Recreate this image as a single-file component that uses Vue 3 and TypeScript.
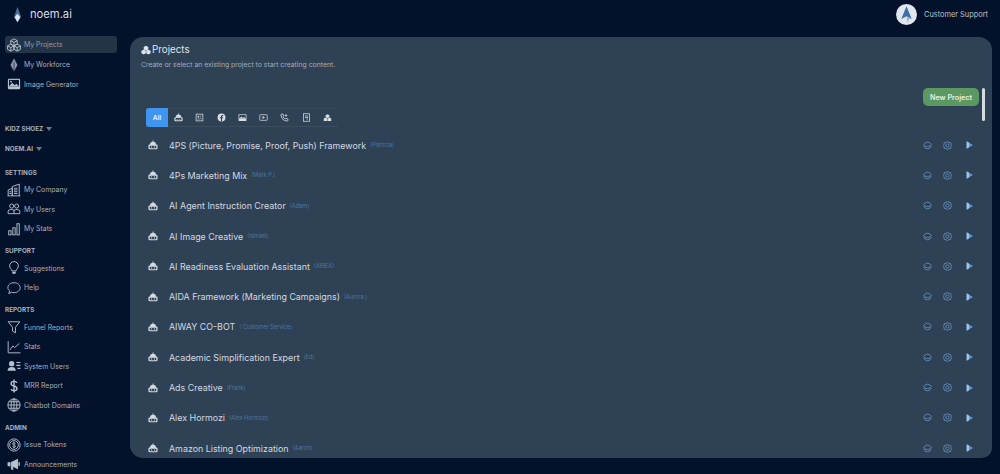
<template>
  <div class="page">
    <aside class="sidebar">
      <div class="brand">
        <svg class="brand-logo" viewBox="0 0 16 24">
          <path d="M8 1 L13 15 L8 23 L3 15 Z" fill="#4a6c94" />
          <path d="M8 11 L12 16 L8 23 L4 16 Z" fill="#dbe7f5" />
        </svg>
        <span>noem.ai</span>
      </div>

      <nav class="nav-top">
        <a
          v-for="item in topNav"
          :key="item.label"
          class="nav-item"
          :class="{ active: item.active }"
        >
          <svg class="nav-icon" viewBox="0 0 24 24" v-html="icons[item.icon]"></svg>
          {{ item.label }}
        </a>
      </nav>

      <div class="org first">KIDZ SHOEZ <span class="caret"></span></div>
      <div class="org">NOEM.AI <span class="caret"></span></div>

      <section v-for="group in groups" :key="group.title" class="group">
        <h4>{{ group.title }}</h4>
        <a v-for="item in group.items" :key="item.label" class="nav-item">
          <svg class="nav-icon" viewBox="0 0 24 24" v-html="icons[item.icon]"></svg>
          {{ item.label }}
        </a>
      </section>
    </aside>

    <div class="main">
      <header class="topbar">
        <svg class="avatar" viewBox="0 0 24 24">
          <circle cx="12" cy="12" r="12" fill="#dfe6ee" />
          <path d="M12 2.5 L18 17 L12 14 L6 17 Z" fill="#3f6ea6" />
          <path d="M12 14 L16 16 L13 21 Z" fill="#9db6c9" />
        </svg>
        <span>Customer Support</span>
      </header>

      <main class="panel">
        <span class="scrollbar"></span>
        <h1>
          <svg class="title-icon" viewBox="0 0 24 24" v-html="icons.cubesSolid"></svg>
          Projects
        </h1>
        <p class="sub">Create or select an existing project to start creating content.</p>

        <div class="actions">
          <button class="new-btn">New Project</button>
        </div>

        <div class="tabs">
          <span class="tab on">All</span>
          <span v-for="t in tabs" :key="t" class="tab">
            <svg viewBox="0 0 24 24" v-html="icons[t]"></svg>
          </span>
        </div>

        <ul class="rows">
          <li v-for="row in projects" :key="row.name" class="row">
            <svg class="row-bot" viewBox="0 0 24 24" v-html="icons.bot"></svg>
            <span class="name">{{ row.name }}</span>
            <span class="owner">{{ row.owner }}</span>
            <span class="row-actions">
              <svg viewBox="0 0 24 24" v-html="icons.layers"></svg>
              <svg viewBox="0 0 24 24" v-html="icons.gear"></svg>
              <svg class="play" viewBox="0 0 24 24">
                <path d="M5 1 L24 12 L5 23 Z" fill="#4f9be8" />
                <path d="M5 1 L12 5 V19 L5 23 Z" fill="#a9c4dd" />
              </svg>
            </span>
          </li>
        </ul>
      </main>
    </div>
  </div>
</template>

<script setup lang="ts">
interface NavItem {
  label: string;
  icon: string;
  active?: boolean;
}

const line = 'fill="none" stroke="currentColor" stroke-width="1.6"';

const icons: Record<string, string> = {
  cubes: `<g ${line}><path d="M12 1.5 L17.5 4.5 V10.5 L12 13.5 L6.5 10.5 V4.5 Z"/><path d="M6.5 10.5 L12 13.5 V19.5 L6.5 22.5 L1 19.5 V13.5 Z"/><path d="M17.5 10.5 L23 13.5 V19.5 L17.5 22.5 L12 19.5 V13.5 Z"/><path d="M6.5 4.5 L12 7.5 L17.5 4.5 M12 7.5 V13.5 M1 13.5 L6.5 16.5 L12 13.5 L17.5 16.5 L23 13.5 M6.5 16.5 V22.5 M17.5 16.5 V22.5"/></g>`,
  cubesSolid: `<path d="M12 1.5 L17.5 4.5 V10.5 L12 13 L6.5 10.5 V4.5 Z M6.5 11.5 L11.5 14 V20 L6.5 22.5 L1 20 V14 Z M17.5 11.5 L23 14 V20 L17.5 22.5 L12.5 20 V14 Z" fill="currentColor"/>`,
  drop: `<path d="M12 1 L18 12 L12 23 L6 12 Z" fill="currentColor" opacity=".75"/><path d="M12 7 V23" stroke="#0a1a33" stroke-width="1"/>`,
  image: `<rect x="1.5" y="3" width="21" height="18" rx="2" fill="currentColor"/><rect x="3.5" y="5" width="17" height="11" fill="#06152d"/><path d="M3.5 16 L9 10 L13 14 L16 11.5 L20.5 16 Z" fill="currentColor"/><circle cx="7" cy="8" r="1.5" fill="currentColor"/>`,
  company: `<g ${line}><path d="M2 22 V12 L9 9 V22"/><path d="M9 22 V6 L21 2 V22"/><path d="M1 22 H23"/><path d="M12 9 H18 M12 12 H18 M12 15 H18 M12 18 H18 M4 15 H7 M4 18 H7"/></g>`,
  users: `<g ${line}><circle cx="8" cy="7" r="3.5"/><circle cx="16.5" cy="7" r="3.5"/><path d="M2 20 V16 Q2 13 6 13 H10 Q12 13 12 16 V20 Z"/><path d="M12 16 Q12 13 15 13 H18 Q22 13 22 16 V20 H12"/></g>`,
  stats: `<g ${line}><rect x="3" y="15" width="4" height="7"/><rect x="10" y="10" width="4" height="12"/><rect x="17" y="3" width="4" height="19"/></g>`,
  bulb: `<path d="M8.5 17 C8 13.5 4.5 12.5 4.5 8.5 A7.5 7.5 0 0 1 19.5 8.5 C19.5 12.5 16 13.5 15.5 17 Z" ${line}/><path d="M9 18.5 H15 V21 Q12 23.5 9 21 Z" fill="currentColor"/>`,
  chat: `<path d="M12 3 C18 3 22.5 6.5 22.5 11.5 S18 20 12 20 C10.5 20 9 19.8 8 19.3 L3 21.5 L4.5 17 C2.5 15.5 1.5 13.5 1.5 11.5 C1.5 6.5 6 3 12 3 Z" ${line}/>`,
  funnel: `<path d="M2 3 H22 L14.5 12.5 V22 L9.5 19 V12.5 Z" ${line}/>`,
  chart: `<g ${line}><path d="M2 2 V22 H23"/><path d="M5 17 L10 10 L13 13 L21 6"/></g>`,
  sysusers: `<circle cx="8" cy="8" r="4.5" fill="currentColor"/><path d="M1 20 Q1 13.5 8 13.5 Q15 13.5 15 20 Z" fill="currentColor"/><path d="M16 6 H23 M16 11 H23 M18 16 H23" stroke="currentColor" stroke-width="2"/>`,
  dollar: `<path d="M17 6.5 Q16 4 12 4 Q7 4 7 7.7 Q7 11 12 12 Q17 13 17 16.5 Q17 20 12 20 Q8 20 7 17.5 M12 1 V23" fill="none" stroke="currentColor" stroke-width="2.4"/>`,
  globe: `<g ${line}><circle cx="12" cy="12" r="10.5"/><ellipse cx="12" cy="12" rx="5" ry="10.5"/><path d="M12 1.5 V22.5 M1.5 12 H22.5 M3 6.5 H21 M3 17.5 H21"/></g>`,
  coin: `<g ${line}><circle cx="12" cy="12" r="10.5"/><circle cx="12" cy="12" r="7.5"/></g><path d="M14.5 9.5 Q14 8 12 8 Q9.5 8 9.5 10 Q9.5 11.5 12 12 Q14.5 12.5 14.5 14 Q14.5 16 12 16 Q10 16 9.5 14.5 M12 6.5 V17.5" fill="none" stroke="currentColor" stroke-width="1.4"/>`,
  megaphone: `<path d="M1 9 H6 V16 H1 Z M7 8.5 L19 3 V21 L7 15.5 Z" fill="currentColor"/><path d="M6 16 H10 L11 22 H7.5 Z" fill="currentColor"/><path d="M21 9 V15" stroke="currentColor" stroke-width="2.4"/>`,
  bot: `<path d="M12 1 V5" stroke="currentColor" stroke-width="2"/><path d="M4.5 12 Q4.5 4 12 4 Q19.5 4 19.5 12 Z" fill="currentColor"/><rect x="1" y="11" width="22" height="11" rx="3" fill="currentColor"/><rect x="4" y="13.5" width="16" height="6" rx="2" fill="#2f4154"/><circle cx="8.5" cy="16.5" r="1.5" fill="currentColor"/><circle cx="15.5" cy="16.5" r="1.5" fill="currentColor"/>`,
  news: `<rect x="3" y="3" width="18" height="18" fill="none" stroke="currentColor" stroke-width="2"/><path d="M7 7 H11 V12 H7 Z" fill="currentColor"/><path d="M13.5 8 H17 M13.5 12 L17 17 M7 16 H12" stroke="currentColor" stroke-width="2"/>`,
  facebook: `<circle cx="12" cy="12" r="10.5" fill="currentColor"/><path d="M13.5 22 V14 H16 L16.5 11 H13.5 V9.5 Q13.5 8 15 8 H16.6 V5.2 Q15.5 5 14.4 5 Q10.5 5 10.5 9 V11 H8 V14 H10.5 V22 Z" fill="#2f4154"/>`,
  picture: `<rect x="1.5" y="3" width="21" height="18" rx="1.5" fill="currentColor"/><rect x="3.5" y="5" width="17" height="10" fill="#2f4154"/><path d="M3.5 15 L9 9.5 L13 13 L16 10.5 L20.5 15 Z" fill="currentColor"/>`,
  video: `<rect x="2" y="4.5" width="20" height="15" rx="2" fill="none" stroke="currentColor" stroke-width="2"/><path d="M9.5 8 L16 12 L9.5 16 Z" fill="currentColor"/>`,
  phone: `<path d="M4 3 L8 3 L10 8 L8 10 Q10 14 14 16 L16 14 L21 16 V20 Q21 21.5 19 21.5 Q4 20 2.5 5 Q2.5 3 4 3 Z" fill="none" stroke="currentColor" stroke-width="2.2"/><path d="M16 3 V10 M12.5 6.5 H19.5" stroke="currentColor" stroke-width="2"/>`,
  form: `<rect x="4" y="2" width="16" height="20" fill="none" stroke="currentColor" stroke-width="2"/><path d="M8 8 H16 M8 12 H16 M12 16 H16" stroke="currentColor" stroke-width="2"/>`,
  stack: `<path d="M12 3 L17 6 V11 L12 13 L7 11 V6 Z M6.5 12 L11.5 14.5 V21 H2 V14.5 Z M17.5 12 L22 14.5 V21 H12.5 V14.5 Z" fill="currentColor"/>`,
  layers: `<g fill="none" stroke="currentColor" stroke-width="2"><path d="M12 3 Q18 3 22.5 9.5 Q18 15 12 15 Q6 15 1.5 9.5 Q6 3 12 3 Z"/><path d="M2 13 Q5 21 12 21 Q19 21 22 13"/></g>`,
  gear: `<g fill="none" stroke="currentColor" stroke-width="2"><path d="M12 1.5 L16 3.5 L20.5 4.5 L21.5 9 L22.5 12 L21.5 15 L20.5 19.5 L16 20.5 L12 22.5 L8 20.5 L3.5 19.5 L2.5 15 L1.5 12 L2.5 9 L3.5 4.5 L8 3.5 Z"/><circle cx="12" cy="12" r="4.5"/></g>`,
};

const topNav: NavItem[] = [
  { label: "My Projects", icon: "cubes", active: true },
  { label: "My Workforce", icon: "drop" },
  { label: "Image Generator", icon: "image" },
];

const groups: { title: string; items: NavItem[] }[] = [
  {
    title: "SETTINGS",
    items: [
      { label: "My Company", icon: "company" },
      { label: "My Users", icon: "users" },
      { label: "My Stats", icon: "stats" },
    ],
  },
  {
    title: "SUPPORT",
    items: [
      { label: "Suggestions", icon: "bulb" },
      { label: "Help", icon: "chat" },
    ],
  },
  {
    title: "REPORTS",
    items: [
      { label: "Funnel Reports", icon: "funnel" },
      { label: "Stats", icon: "chart" },
      { label: "System Users", icon: "sysusers" },
      { label: "MRR Report", icon: "dollar" },
      { label: "Chatbot Domains", icon: "globe" },
    ],
  },
  {
    title: "ADMIN",
    items: [
      { label: "Issue Tokens", icon: "coin" },
      { label: "Announcements", icon: "megaphone" },
    ],
  },
];

const tabs = ["bot", "news", "facebook", "picture", "video", "phone", "form", "stack"];

const projects = [
  { name: "4PS (Picture, Promise, Proof, Push) Framework", owner: "(Patricia)" },
  { name: "4Ps Marketing Mix", owner: "(Mark P.)" },
  { name: "AI Agent Instruction Creator", owner: "(Adam)" },
  { name: "AI Image Creative", owner: "(Ismael)" },
  { name: "AI Readiness Evaluation Assistant", owner: "(AIREA)" },
  { name: "AIDA Framework (Marketing Campaigns)", owner: "(Aurora )" },
  { name: "AIWAY CO-BOT", owner: "( Customer Service)" },
  { name: "Academic Simplification Expert", owner: "(Ed)" },
  { name: "Ads Creative", owner: "(Frank)" },
  { name: "Alex Hormozi", owner: "(Alex Hormozi)" },
  { name: "Amazon Listing Optimization", owner: "(Aaron)" },
];
</script>

<style>
html,
body {
  margin: 0;
  background: #03112a;
}
</style>

<style scoped>
.page {
  display: flex;
  width: 1000px;
  height: 474px;
  overflow: hidden;
  background: #03112a;
  color: #c4ccd6;
  font-family: Inter, "Liberation Sans", sans-serif;
}

.sidebar {
  flex: 0 0 130px;
  box-sizing: border-box;
  padding: 0 13px 0 5px;
}

.brand {
  display: flex;
  align-items: center;
  gap: 5px;
  height: 28px;
  padding-left: 5px;
  font-size: 11.2px;
  color: #d8dee6;
}

.brand-logo {
  width: 15px;
  height: 17px;
}

.nav-top {
  margin-top: 8px;
}

.nav-item {
  display: flex;
  align-items: center;
  gap: 3px;
  height: 19.5px;
  font-size: 6.9px;
  color: #a6b0bc;
  border-radius: 3px;
}

.nav-item.active {
  height: 17px;
  margin-bottom: 2px;
  background: #243447;
  color: #8f9bab;
}

.nav-icon {
  flex: 0 0 14px;
  width: 14px;
  height: 14px;
  margin-left: 2px;
  color: #b6c2d0;
}

.org,
.group h4 {
  margin: 0;
  font-size: 6.3px;
  font-weight: 700;
  color: #a8b2bf;
}

.org {
  display: flex;
  align-items: center;
  gap: 3px;
  height: 20px;
}

.org.first {
  margin-top: 25px;
}

.caret {
  width: 0;
  height: 0;
  border-left: 3px solid transparent;
  border-right: 3px solid transparent;
  border-top: 4px solid #6d7a8a;
}

.group {
  margin-top: 5px;
}

.org + .group {
  margin-top: 6px;
}

.group h4 {
  display: flex;
  align-items: center;
  height: 15px;
}

.main {
  flex: 1;
  display: flex;
  flex-direction: column;
  min-width: 0;
  padding-right: 8px;
}

.topbar {
  flex: 0 0 37px;
  display: flex;
  align-items: center;
  justify-content: flex-end;
  gap: 7px;
  padding: 0 4px 9px 0;
  box-sizing: border-box;
  font-size: 7.4px;
  color: #b8c2ce;
}

.avatar {
  width: 21px;
  height: 21px;
  margin-top: 1px;
}

.panel {
  position: relative;
  flex: 0 0 421px;
  box-sizing: border-box;
  padding: 6px 11px 0;
  overflow: hidden;
  background: #2f4154;
  border-radius: 13px 13px 10px 13px;
}

.scrollbar {
  position: absolute;
  top: 51px;
  right: 7px;
  width: 3px;
  height: 33px;
  background: #d5dbe2;
  border-radius: 2px;
}

h1 {
  display: flex;
  align-items: center;
  gap: 1px;
  margin: 0;
  font-size: 9.8px;
  font-weight: 400;
  line-height: 13px;
  color: #dfe5ec;
}

.title-icon {
  width: 10px;
  height: 10px;
}

.sub {
  margin: 4px 0 0;
  font-size: 6.85px;
  line-height: 9px;
  color: #a1adba;
}

.actions {
  display: flex;
  justify-content: flex-end;
  margin-top: 19px;
  padding-right: 2px;
}

.new-btn {
  width: 56px;
  height: 18px;
  padding: 0;
  border: 0;
  border-radius: 5px;
  background: #5b9862;
  font: 600 7.2px Inter, "Liberation Sans", sans-serif;
  color: #e6f0e8;
}

.tabs {
  display: flex;
  width: 192px;
  height: 19px;
  margin: 2px 0 0 5px;
  box-sizing: border-box;
  border-bottom: 1px solid #3a4c5e;
  border-top: 1px solid #35475a;
}

.tab {
  flex: 1;
  display: flex;
  align-items: center;
  justify-content: center;
  color: #d6dce3;
}

.tab.on {
  flex: 0 0 22px;
  margin: -1px 0;
  border-radius: 3px 0 0 3px;
  background: #3f95ef;
  font-size: 6.8px;
  font-weight: 600;
  color: #e8f2fd;
}

.tab svg {
  width: 9px;
  height: 9px;
}

.rows {
  margin: 3px 0 0;
  padding: 0;
  list-style: none;
}

.row {
  display: flex;
  align-items: center;
  height: 30.3px;
  padding-left: 7px;
}

.row-bot {
  flex: 0 0 10px;
  width: 10px;
  height: 10px;
  margin-right: 11px;
  color: #d3dae2;
}

.name {
  font-size: 8.9px;
  color: #d3dae2;
}

.owner {
  margin-left: 4px;
  font-size: 5.6px;
  color: #4a78a6;
}

.row-actions {
  display: flex;
  align-items: center;
  gap: 11px;
  margin-left: auto;
  padding-right: 8px;
  color: #6f9ccb;
}

.row-actions svg {
  width: 9px;
  height: 9px;
}

.row-actions .play {
  width: 8px;
  height: 8px;
  margin-left: 2px;
}
</style>
